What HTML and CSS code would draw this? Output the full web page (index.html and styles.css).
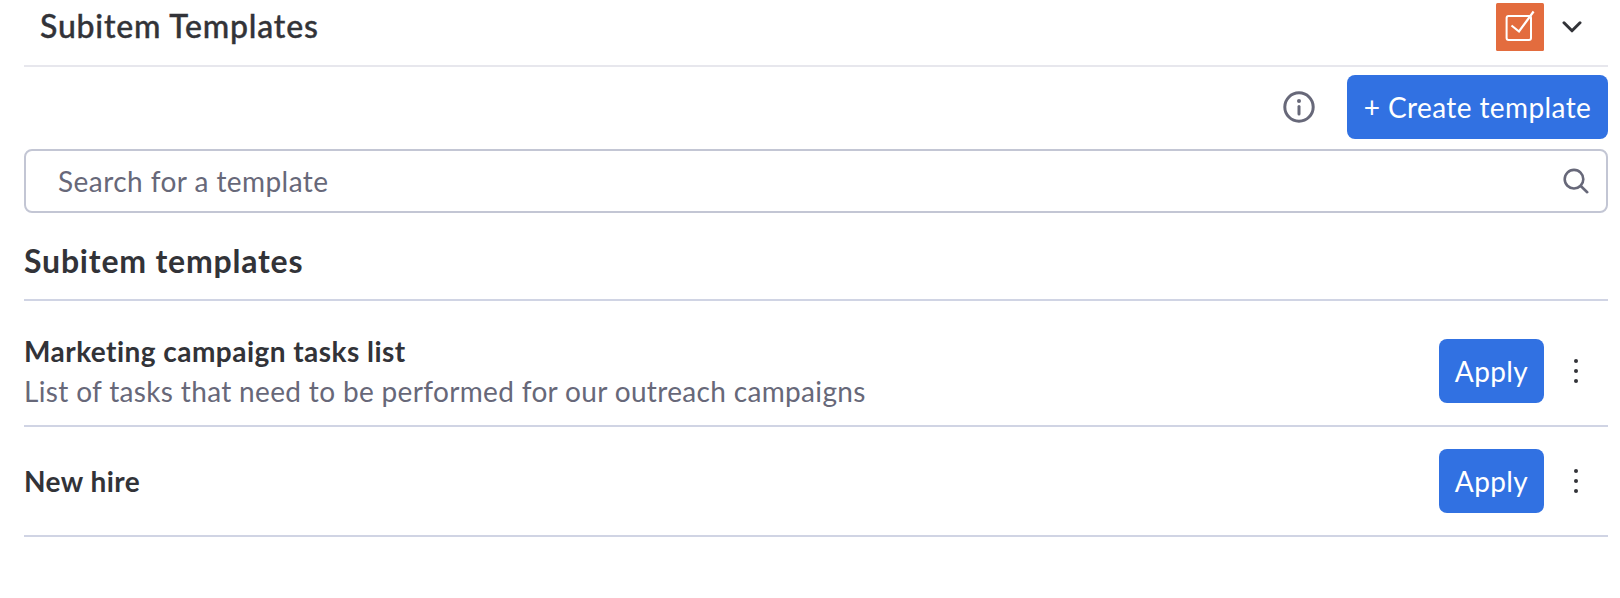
FILE: index.html
```html
<!DOCTYPE html>
<html lang="en">
<head>
    <meta charset="UTF-8">
    <meta name="viewport" content="width=device-width, initial-scale=1.0">
    <title>Subitem Templates</title>
    <link rel="stylesheet" href="styles.css">
</head>
<body>
    <div class="panel">
        <header class="panel-header">
            <h1 class="panel-title">Subitem Templates</h1>
            <div class="app-switch">
                <svg class="app-logo" width="48" height="48" viewBox="0 0 48 48" fill="none" stroke="#fff" stroke-width="2">
                    <rect width="48" height="48" rx="1.5" fill="#e36c3e" stroke="none"/>
                    <rect x="10.6" y="13" width="24.4" height="24" rx="2"/>
                    <path d="M15.5 22.5l7.5 6L37.6 8.5" stroke-width="2.2"/>
                </svg>
                <svg class="chevron" width="20" height="14" viewBox="0 0 20 14" fill="none" stroke="#323338" stroke-width="3" stroke-linecap="round" stroke-linejoin="round">
                    <path d="M2 2.8l8 8 8-8"/>
                </svg>
            </div>
        </header>

        <div class="toolbar">
            <svg class="info" width="32" height="32" viewBox="0 0 32 32" fill="none" stroke="#676879" stroke-width="3" stroke-linecap="round">
                <circle cx="16" cy="16" r="14.2"/>
                <path d="M16 15.5v7.5"/>
                <circle cx="16" cy="10" r="2" fill="#676879" stroke="none"/>
            </svg>
            <button class="btn btn-create">+ Create template</button>
        </div>

        <div class="search">
            <input class="search-input" type="text" placeholder="Search for a template">
            <svg width="26" height="26" viewBox="0 0 26 26" fill="none" stroke="#676879" stroke-width="2.6" stroke-linecap="round">
                <circle cx="11" cy="11.2" r="9.3"/>
                <path d="M17.8 18l6.4 6.2"/>
            </svg>
        </div>

        <h2 class="section-title">Subitem templates</h2>

        <div class="list">
            <div class="row">
                <div class="row-text">
                    <h3 class="row-title">Marketing campaign tasks list</h3>
                    <p class="row-desc">List of tasks that need to be performed for our outreach campaigns</p>
                </div>
                <button class="btn btn-apply">Apply</button>
                <svg class="dots" width="4" height="24" viewBox="0 0 4 24" fill="#323338">
                    <circle cx="2" cy="2" r="2"/>
                    <circle cx="2" cy="12" r="2"/>
                    <circle cx="2" cy="22" r="2"/>
                </svg>
            </div>
            <div class="row">
                <div class="row-text">
                    <h3 class="row-title">New hire</h3>
                </div>
                <button class="btn btn-apply">Apply</button>
                <svg class="dots" width="4" height="24" viewBox="0 0 4 24" fill="#323338">
                    <circle cx="2" cy="2" r="2"/>
                    <circle cx="2" cy="12" r="2"/>
                    <circle cx="2" cy="22" r="2"/>
                </svg>
            </div>
        </div>
    </div>
</body>
</html>
```
FILE: styles.css
```css
* {
    box-sizing: border-box;
}

body {
    margin: 0;
    background: #fff;
    color: #323338;
    font-family: Lato, 'Liberation Sans', sans-serif;
    font-size: 28px;
}

h1, h2, h3, p {
    margin: 0;
}

svg {
    display: block;
    flex-shrink: 0;
}

.panel {
    padding: 0 12px 0 24px;
}

.panel-header {
    display: flex;
    align-items: center;
    justify-content: space-between;
    height: 67px;
    padding: 3px 26px 14px 16px;
    border-bottom: 2px solid #e7e7ed;
}

.panel-title {
    padding-bottom: 2px;
    font-size: 32px;
    font-weight: 500;
    line-height: 46px;
    letter-spacing: 0.8px;
    -webkit-text-stroke: 0.4px #323338;
}

.app-switch {
    display: flex;
    align-items: center;
    gap: 18px;
}

.toolbar {
    display: flex;
    align-items: center;
    justify-content: flex-end;
    gap: 32px;
    padding: 8px 0 10px;
}

.btn {
    height: 64px;
    padding: 0;
    border: none;
    border-radius: 8px;
    background: #3171e2;
    color: #fff;
    font-family: inherit;
    font-size: 28px;
    letter-spacing: 0.4px;
    white-space: nowrap;
    cursor: pointer;
}

.btn:hover {
    background: #2860c4;
}

.btn-create {
    width: 261px;
}

.btn-apply {
    width: 105px;
}

.search {
    display: flex;
    align-items: center;
    height: 64px;
    padding: 0 17px 0 32px;
    border: 2px solid #c3c6d4;
    border-radius: 8px;
}

.search-input {
    flex: 1;
    padding: 0;
    border: none;
    outline: none;
    background: none;
    color: #323338;
    font-family: inherit;
    font-size: 28px;
    letter-spacing: 0.44px;
}

.search-input::placeholder {
    color: #676879;
    opacity: 1;
}

.section-title {
    height: 88px;
    padding-top: 24px;
    border-bottom: 2px solid #d0d4e4;
    font-size: 32px;
    font-weight: 700;
    line-height: 48px;
    letter-spacing: 0.8px;
}

.list {
    padding-top: 16px;
}

.row {
    display: flex;
    align-items: center;
    height: 110px;
    padding-right: 30px;
    border-bottom: 2px solid #d0d4e4;
}

.row-text {
    flex: 1;
}

.row-title {
    font-size: 28px;
    font-weight: 700;
    line-height: 40px;
    letter-spacing: 0.46px;
}

.row-desc {
    color: #676879;
    line-height: 40px;
    letter-spacing: 0.34px;
}

.dots {
    margin-left: 30px;
}
```
